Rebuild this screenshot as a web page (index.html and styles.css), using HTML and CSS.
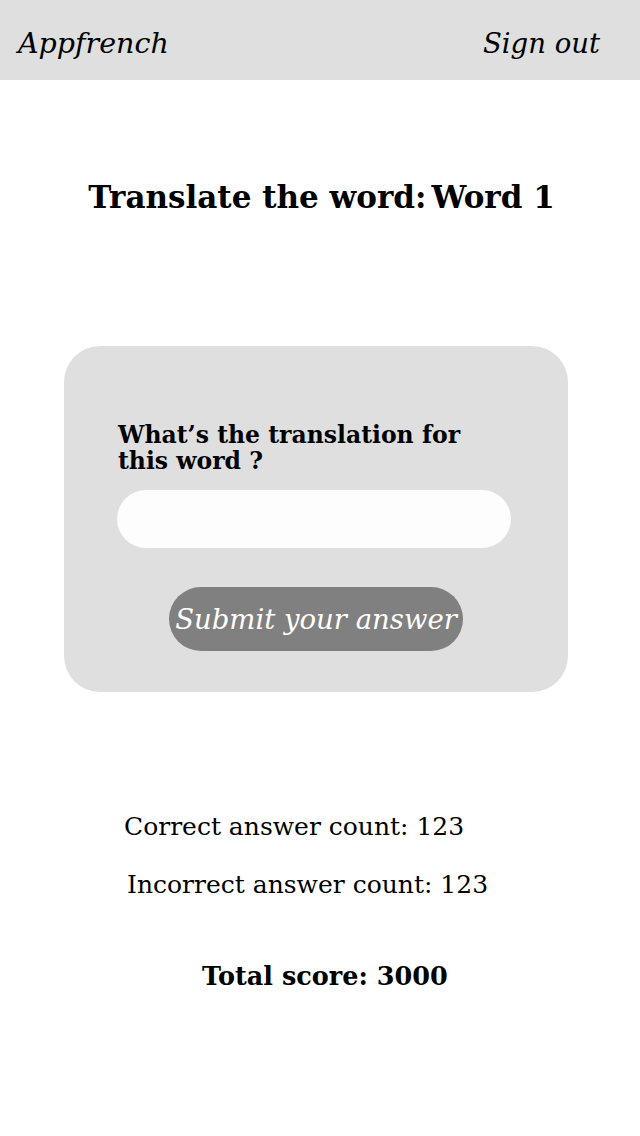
FILE: index.html
```html
<!DOCTYPE html>
<html lang="en">
<head>
<meta charset="utf-8">
<title>Appfrench</title>
<link rel="stylesheet" href="styles.css">
</head>
<body>
<header class="topbar">
  <span class="brand">Appfrench</span>
  <a class="signout" href="#">Sign out</a>
</header>
<main class="page">
  <h1 class="title">Translate the word:<span class="word">Word 1</span></h1>
  <section class="card">
    <label class="question" for="answer">What’s the translation for this word ?</label>
    <input class="answer" id="answer" type="text">
    <button class="submit" type="button">Submit your answer</button>
  </section>
  <div class="stats">
    <p class="stat correct">Correct answer count: 123</p>
    <p class="stat incorrect">Incorrect answer count: 123</p>
  </div>
  <p class="total">Total score: 3000</p>
</main>
</body>
</html>
```
FILE: styles.css
```css
* { box-sizing: border-box; }
html, body { margin: 0; padding: 0; background: #ffffff; }
body {
  font-family: "DejaVu Serif", "Liberation Serif", serif;
  color: #000;
  width: 640px;
}
.topbar {
  height: 80px;
  background: #dfdfdf;
  display: flex;
  align-items: center;
  justify-content: space-between;
  padding: 0 40px 0 18px;
}
.brand, .signout {
  font-style: italic;
  font-size: 28.5px;
  color: #000;
  text-decoration: none;
  padding-top: 6px;
}
.signout { font-size: 27.5px; }
.page {
  display: flex;
  flex-direction: column;
}
.title {
  margin: 99px 0 0 0;
  text-align: center;
  font-size: 31px;
  font-weight: bold;
  padding-left: 3px;
}
.title .word { margin-left: 5px; }
.card {
  margin: 131px 72px 0 64px;
  height: 346px;
  background: #dfdfdf;
  border-radius: 36px;
  padding: 76px 57px 0 53px;
  display: flex;
  flex-direction: column;
}
.question {
  font-weight: bold;
  font-size: 23.5px;
  line-height: 26px;
  padding-left: 1px;
  padding-right: 30px;
}
.answer {
  margin-top: 16px;
  height: 58px;
  border: none;
  border-radius: 29px;
  background: #fdfdfd;
  outline: none;
}
.submit {
  align-self: center;
  margin: 39px 0 0 4px;
  width: 294px;
  height: 64px;
  border: none;
  border-radius: 32px;
  background: #808080;
  color: #fff;
  font-family: "DejaVu Serif", "Liberation Serif", serif;
  font-style: italic;
  font-size: 27.5px;
  padding: 0;
}
.stats {
  margin-top: 121px;
  display: flex;
  flex-direction: column;
  gap: 30px;
}
.stat {
  margin: 0;
  font-size: 25px;
  line-height: 28px;
}
.correct { padding-left: 124px; }
.incorrect { padding-left: 127px; }
.total {
  margin: 62px 0 0 202px;
  font-size: 25.5px;
  font-weight: bold;
}
```
